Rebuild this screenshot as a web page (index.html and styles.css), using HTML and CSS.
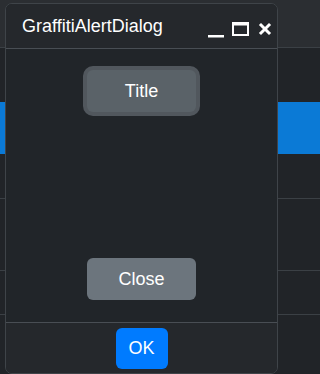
FILE: index.html
```html
<!DOCTYPE html>
<html>
<head>
<meta charset="utf-8">
<link rel="stylesheet" href="styles.css">
</head>
<body>
<div class="dialog">
  <div class="dialog-header">
    <span class="dialog-title">GraffitiAlertDialog</span>
    <svg class="window-controls" width="66" height="44" viewBox="0 0 66 44">
      <rect x="1" y="31" width="16" height="2.5" fill="#fff"/>
      <rect x="26" y="19" width="15" height="12" fill="none" stroke="#fff" stroke-width="2"/>
      <rect x="25" y="18" width="17" height="3.5" fill="#fff"/>
      <path d="M54 21 L62 29 M62 21 L54 29" stroke="#fff" stroke-width="3" stroke-linecap="square"/>
    </svg>
  </div>
  <div class="dialog-body">
    <button class="btn btn-focus">Title</button>
    <button class="btn btn-secondary">Close</button>
  </div>
  <div class="dialog-footer">
    <button class="btn btn-primary">OK</button>
  </div>
</div>
</body>
</html>
```
FILE: styles.css
```css
html, body {
  margin: 0;
  padding: 0;
}
html {
  background: #212428;
}
body {
  height: 374px;
  overflow: hidden;
  padding-top: 3px;
  box-sizing: border-box;
  font-family: "Liberation Sans", Arial, sans-serif;
  background:
    linear-gradient(#0b7ad6, #0b7ad6) 0 102px / 100% 52px no-repeat,
    linear-gradient(#3b4045, #3b4045) 0 47px / 100% 1px no-repeat,
    linear-gradient(#3b4045, #3b4045) 0 198px / 100% 1px no-repeat,
    linear-gradient(#3b4045, #3b4045) 0 270px / 100% 1px no-repeat,
    linear-gradient(#3b4045, #3b4045) 0 314px / 100% 1px no-repeat,
    linear-gradient(#2b2e32, #2b2e32) 0 0 / 100% 47px no-repeat,
    #212428;
}
.dialog {
  margin-left: 5px;
  width: 273px;
  height: 371px;
  box-sizing: border-box;
  border: 1px solid #3f4449;
  border-radius: 7px;
  background: #212529;
  display: flex;
  flex-direction: column;
  overflow: hidden;
}
.dialog-header {
  height: 45px;
  box-sizing: border-box;
  border-bottom: 1px solid #494e54;
  background: #25282c;
  display: flex;
  align-items: flex-start;
  justify-content: space-between;
  padding-left: 16px;
  padding-right: 4px;
}
.dialog-title {
  color: #fff;
  font-size: 18px;
  line-height: 43px;
  padding-top: 1px;
}
.window-controls {
  display: block;
}
.dialog-body {
  height: 273px;
  box-sizing: border-box;
  padding-top: 21px;
  display: flex;
  flex-direction: column;
  align-items: center;
  gap: 146px;
}
.dialog-footer {
  flex: 1;
  border-top: 1px solid #494e54;
  background: #25282c;
  display: flex;
  align-items: center;
  justify-content: center;
}
.btn {
  font-family: "Liberation Sans", Arial, sans-serif;
  font-size: 18px;
  color: #fff;
  border: none;
  border-radius: 6px;
  padding: 0;
  height: 42px;
  line-height: 42px;
  width: 109px;
  margin: 0;
}
.btn-focus {
  background: #5a6268;
  box-shadow: 0 0 0 4px rgba(130, 138, 145, 0.5);
}
.btn-secondary {
  background: #6c757d;
}
.btn-primary {
  background: #007bff;
  width: 52px;
  height: 41px;
  line-height: 41px;
}
```
